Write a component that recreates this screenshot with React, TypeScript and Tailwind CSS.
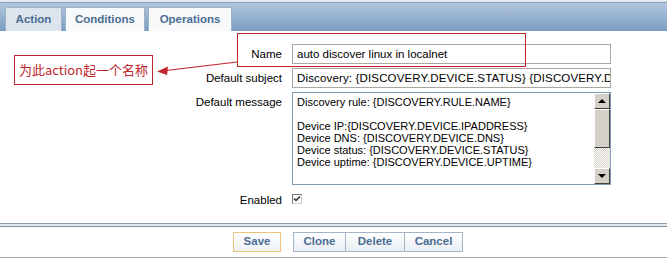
const FONT = "font-['Liberation_Sans',Arial,sans-serif]";

const TABS = [
  { label: 'Action', active: true, width: 'w-[57px]' },
  { label: 'Conditions', active: false, width: 'w-[80px]' },
  { label: 'Operations', active: false, width: 'w-[84px]' },
];

const MESSAGE_LINES = [
  'Discovery rule: {DISCOVERY.RULE.NAME}',
  '',
  'Device IP:{DISCOVERY.DEVICE.IPADDRESS}',
  'Device DNS: {DISCOVERY.DEVICE.DNS}',
  'Device status: {DISCOVERY.DEVICE.STATUS}',
  'Device uptime: {DISCOVERY.DEVICE.UPTIME}',
];

function Scrollbar() {
  return (
    <div className="flex flex-col w-[16px] h-full shrink-0">
      {/* up button */}
      <div className="h-[16px] bg-[#d4d0c8] border border-t-white border-l-white border-r-[#404040] border-b-[#404040] flex items-center justify-center">
        <div className="w-0 h-0 border-l-[4px] border-r-[4px] border-b-[4px] border-l-transparent border-r-transparent border-b-black" />
      </div>
      {/* thumb */}
      <div className="h-[39px] bg-[#d4d0c8] border border-t-white border-l-white border-r-[#404040] border-b-[#404040]" />
      {/* track */}
      <div className="flex-1 bg-[repeating-conic-gradient(#d4d0c8_0_25%,#ffffff_0_50%)] bg-[length:2px_2px]" />
      {/* down button */}
      <div className="h-[16px] bg-[#d4d0c8] border border-t-white border-l-white border-r-[#404040] border-b-[#404040] flex items-center justify-center">
        <div className="w-0 h-0 border-l-[4px] border-r-[4px] border-t-[4px] border-l-transparent border-r-transparent border-t-black" />
      </div>
    </div>
  );
}

export default function App() {
  return (
    <div className={`relative w-[667px] h-[259px] bg-white overflow-hidden text-black ${FONT}`}>
      {/* Tab bar */}
      <div className="h-[31px] border-t-[2px] border-t-[#e4e9ee] bg-gradient-to-b from-[#b4c7dc] to-[#7a9dc3] shadow-[inset_0_1px_0_#8aa0b8] flex items-end pl-[5px] gap-[3px]">
        {TABS.map((tab) => (
          <div
            key={tab.label}
            className={`${tab.width} h-[24px] flex items-center justify-center border border-b-0 border-[#9fb3c8] text-[11.5px] font-bold text-[#4b6c93] ${
              tab.active ? 'bg-[#dce4ed]' : 'bg-[#f7f9fb]'
            }`}
          >
            {tab.label}
          </div>
        ))}
      </div>

      {/* Form */}
      <div className="grid grid-cols-[282px_319px] gap-x-[10px] gap-y-[4px] pt-[13px] text-[11.5px]">
        <div className="text-right leading-[20px]">Name</div>
        <div className="h-[20px] border border-[#a9a9a0] px-[4px] leading-[18px] whitespace-nowrap overflow-hidden">
          auto discover linux in localnet
        </div>

        <div className="text-right leading-[20px]">Default subject</div>
        <div className="h-[20px] border border-[#a9a9a0] pl-[4px] leading-[18px] whitespace-nowrap overflow-hidden tracking-[0.15px]">
          Discovery: {'{'}DISCOVERY.DEVICE.STATUS{'}'} {'{'}DISCOVERY.DEVI
        </div>

        <div className="text-right leading-[20px]">Default message</div>
        <div className="h-[93px] border border-[#7f9db9] flex">
          <div className="flex-1 pl-[4px] pt-[3px] text-[11px] leading-[12px] overflow-hidden whitespace-nowrap">
            {MESSAGE_LINES.map((line, i) => (
              <div key={i} className="h-[12px]">{line}</div>
            ))}
          </div>
          <Scrollbar />
        </div>

        <div className="text-right leading-[12px] mt-[5px]">Enabled</div>
        <div className="mt-[5px] h-[12px] flex items-start">
          <div className="w-[10px] h-[10px] border border-t-[#707070] border-l-[#707070] border-r-[#d0d0d0] border-b-[#d0d0d0] bg-white flex items-center justify-center">
            <svg width="8" height="8" viewBox="0 0 8 8">
              <path d="M1 3.5 L3 5.5 L7 1.5" stroke="#222" strokeWidth="1.4" fill="none" />
            </svg>
          </div>
        </div>
      </div>

      {/* Footer */}
      <div className="absolute left-0 right-0 top-[223px]">
        <div className="h-[4px] border-t border-b border-t-[#8c9cac] border-b-[#7b8b9b] bg-[#e3e9ef]" />
        <div className="flex items-center h-[30px] pl-[233px]">
          <button className="h-[20px] w-[48px] border border-[#eec27a] bg-gradient-to-b from-[#ffffff] to-[#eef2f6] text-[11.5px] font-bold text-[#4b6c93]">
            Save
          </button>
          <div className="flex ml-[12px]">
            <button className="h-[20px] w-[53px] border border-[#a3b5c7] bg-gradient-to-b from-[#ffffff] to-[#e9eef4] text-[11.5px] font-bold text-[#4b6c93]">
              Clone
            </button>
            <button className="h-[20px] w-[59px] border border-l-0 border-[#a3b5c7] bg-gradient-to-b from-[#ffffff] to-[#e9eef4] text-[11.5px] font-bold text-[#4b6c93]">
              Delete
            </button>
            <button className="h-[20px] w-[58px] border border-l-0 border-[#a3b5c7] bg-gradient-to-b from-[#ffffff] to-[#e9eef4] text-[11.5px] font-bold text-[#4b6c93]">
              Cancel
            </button>
          </div>
        </div>
        <div className="h-px bg-[#9aa8b6]" />
      </div>

      {/* Annotation overlay */}
      <div className="absolute left-[237px] top-[33px] w-[289px] h-[34px] border border-[#c0272d]" />
      <div className="absolute left-[14px] top-[55px] w-[139px] h-[30px] border border-[#c0272d] flex items-center justify-center text-[13px] text-[#c0272d] font-['Noto_Sans_CJK_SC',sans-serif]">
        为此action起一个名称
      </div>
      <svg className="absolute left-0 top-0" width="667" height="259">
        <line x1="237" y1="62" x2="166" y2="70.5" stroke="#c0272d" strokeWidth="1.2" />
        <polygon points="157,71.5 168,66.5 167,75" fill="#c0272d" />
      </svg>
    </div>
  );
}
